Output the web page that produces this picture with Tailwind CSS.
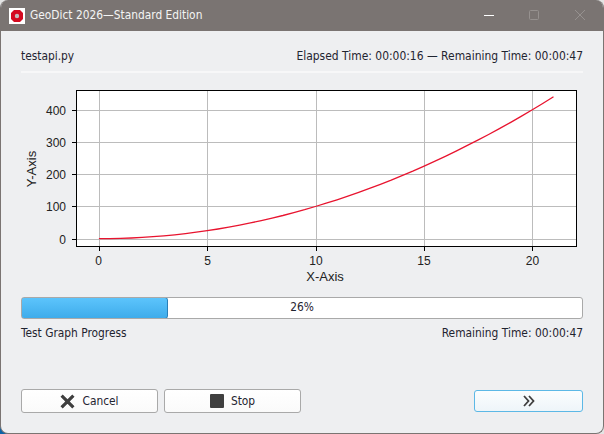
<!DOCTYPE html>
<html lang="en">
<head>
    <meta charset="UTF-8">
    <title>GeoDict 2026—Standard Edition</title>
    <script src="https://cdn.jsdelivr.net/npm/@tailwindcss/browser@4"></script>
</head>
<body class="relative w-[604px] h-[434px] overflow-hidden bg-[#e4e4e4] font-['DejaVu_Sans',sans-serif] [font-stretch:condensed] text-[11.85px] text-[#1f2430]">
    <!-- desktop showing through the bottom left corner -->
    <div class="absolute left-0 bottom-0 w-[10px] h-[10px] bg-[#0b63a8]"></div>
    <div class="relative w-[604px] h-[434px] flex flex-col rounded-[8px] overflow-hidden border-x border-b border-[#7a7472] bg-[#eeeff1]">
        <!-- title bar -->
        <div class="h-[31px] -mx-px shrink-0 flex items-center bg-[#7a7472] text-[#f4f4f4]">
            <div class="ml-[9px] w-[16px] h-[16px] bg-white flex items-center justify-center">
                <svg width="14" height="14" viewBox="0 0 14 14">
                    <polygon points="4,1 10,1 13,4 13,10 10,13 4,13 1,10 1,4" fill="#d40a20"/>
                    <circle cx="7" cy="7" r="2.200" fill="#c4bcbc"/>
                </svg>
            </div>
            <span class="ml-[5px] pt-[1px]">GeoDict 2026—Standard Edition</span>
            <div class="ml-auto flex items-center">
                <svg width="46" height="31" viewBox="0 0 46 31"><path d="M18 15.500h10" stroke="#fff"/></svg>
                <svg width="46" height="31" viewBox="0 0 46 31"><rect x="17.500" y="10.500" width="9" height="9" rx="1" fill="none" stroke="#96918f"/></svg>
                <svg width="46" height="31" viewBox="0 0 46 31"><path d="M17 10l10 10M27 10l-10 10" stroke="#96918f"/></svg>
            </div>
        </div>

        <div class="flex-1 flex flex-col px-[20px] min-h-0">
            <div class="h-[42px] shrink-0 flex items-end justify-between pb-[5px] border-b-2 border-[#f7f7f8]">
                <span>testapi.py</span>
                <span class="text-[11.95px]">Elapsed Time: 00:00:16 — Remaining Time: 00:00:47</span>
            </div>

            <!-- chart -->
            <svg class="block -mx-[21px] shrink-0" width="604" height="224" viewBox="0 73 604 224" font-family="Liberation Sans, sans-serif" font-size="12" fill="#222">
                <rect x="76.500" y="90.500" width="500" height="156" fill="#fff"/>
                <g stroke="#bcbcbc" stroke-width="1">
                    <path d="M99.500 91v155M207.500 91v155M316.500 91v155M424.500 91v155M532.500 91v155"/>
                    <path d="M77 239.500h499M77 206.500h499M77 174.500h499M77 142.500h499M77 110.500h499"/>
                </g>
                <polyline id="curve" fill="none" stroke="#e8142f" stroke-width="1.300" points="98.900,238.700"/>
                <rect x="76.500" y="90.500" width="500" height="156" fill="none" stroke="#000"/>
                <g stroke="#000">
                    <path d="M99.500 247v4M207.500 247v4M316.500 247v4M424.500 247v4M532.500 247v4"/>
                    <path d="M72 239.500h4M72 206.500h4M72 174.500h4M72 142.500h4M72 110.500h4"/>
                </g>
                <g text-anchor="middle">
                    <text x="98.500" y="265">0</text>
                    <text x="207.500" y="265">5</text>
                    <text x="316" y="265">10</text>
                    <text x="424" y="265">15</text>
                    <text x="532.500" y="265">20</text>
                    <text x="325" y="281" font-size="13">X-Axis</text>
                    <text transform="translate(36 169) rotate(-90)" font-size="13">Y-Axis</text>
                </g>
                <g text-anchor="end">
                    <text x="66" y="244">0</text>
                    <text x="66" y="211">100</text>
                    <text x="66" y="179">200</text>
                    <text x="66" y="147">300</text>
                    <text x="66" y="115">400</text>
                </g>
            </svg>

            <!-- progress -->
            <div class="relative h-[22px] shrink-0 rounded-[3px] border border-[#a9a9a9] bg-white flex items-center justify-center overflow-hidden">
                <div class="absolute left-[-1px] top-[-1px] bottom-[-1px] w-[147px] rounded-[3px] border border-[#2a7fb8] bg-gradient-to-b from-[#5cc4fc] to-[#3eaceb]"></div>
                <span class="relative">26%</span>
            </div>
            <div class="mt-[6px] flex justify-between">
                <span>Test Graph Progress</span>
                <span class="text-[11.9px]">Remaining Time: 00:00:47</span>
            </div>

            <!-- buttons -->
            <div class="mt-auto mb-[20px] flex items-center">
                <button class="w-[137px] h-[24px] flex items-center justify-center gap-[7px] rounded-[3px] border border-[#a9a9a9] bg-gradient-to-b from-white to-[#fafafa]">
                    <svg width="15" height="15" viewBox="0 0 14 14"><path d="M1.500 1.500l11 11M12.500 1.500l-11 11" stroke="#3f3f3f" stroke-width="3"/></svg>
                    <span class="pt-[1px]">Cancel</span>
                </button>
                <button class="ml-[6px] w-[137px] h-[24px] flex items-center justify-center gap-[7px] rounded-[3px] border border-[#a9a9a9] bg-gradient-to-b from-white to-[#fafafa]">
                    <span class="w-[14px] h-[14px] rounded-[1px] bg-[#3f3f3f]"></span>
                    <span class="pt-[1px]">Stop</span>
                </button>
                <button class="ml-auto w-[109px] h-[22px] flex items-center justify-center rounded-[3px] border border-[#5cb8e6] bg-gradient-to-b from-[#fbfdfe] to-[#eef5f9]">
                    <svg width="12" height="12" viewBox="0 0 12 12"><path d="M1 1l4.500 5L1 11M6 1l4.500 5L6 11" fill="none" stroke="#3f3f3f" stroke-width="1.800"/></svg>
                </button>
            </div>
        </div>
    </div>
    <script>
        // y = x^2 sampled in plot pixels
        const pts = [];
        for (let x = 0; x <= 21; x += 0.5) {
            pts.push((98.9 + x * 21.65).toFixed(1) + ',' + (238.7 - x * x * 0.3217).toFixed(1));
        }
        document.getElementById('curve').setAttribute('points', pts.join(' '));
    </script>
</body>
</html>
